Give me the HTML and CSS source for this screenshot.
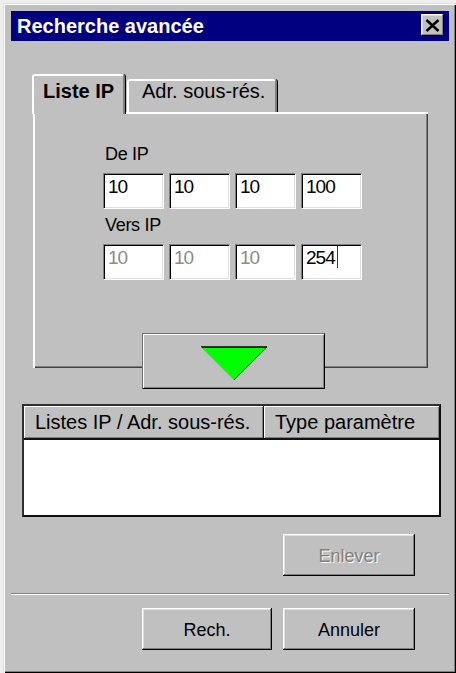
FILE: index.html
```html
<!DOCTYPE html>
<html lang="fr">
<head>
<meta charset="utf-8">
<title>Recherche avancée</title>
<link rel="stylesheet" href="styles.css">
</head>
<body>
<div class="window">
  <div class="titlebar">
    <span class="title">Recherche avancée</span>
    <button class="close" aria-label="Fermer">
      <svg width="15" height="13" viewBox="0 0 15 13"><path d="M1.5 1 L13.5 12 M13.5 1 L1.5 12" stroke="#000" stroke-width="2.5" fill="none"/></svg>
    </button>
  </div>

  <div class="tabs">
    <div class="tab active">Liste IP</div>
    <div class="tab">Adr. sous-rés.</div>
  </div>

  <div class="panel">
    <div class="label">De IP</div>
    <div class="ip-row">
      <div class="field">10</div>
      <div class="field">10</div>
      <div class="field">10</div>
      <div class="field">100</div>
    </div>
    <div class="label label-2">Vers IP</div>
    <div class="ip-row">
      <div class="field disabled">10</div>
      <div class="field disabled">10</div>
      <div class="field disabled">10</div>
      <div class="field">254<span class="caret"></span></div>
    </div>
  </div>

  <div class="arrow-wrap">
    <button class="arrow-btn" aria-label="Ajouter">
      <svg width="68" height="35" viewBox="0 0 68 35">
        <polygon points="1,1 67,1 34,34" fill="#00ff00"/>
        <line x1="1" y1="1" x2="67" y2="1" stroke="#000" stroke-width="1.6"/>
        <line x1="67" y1="1" x2="34" y2="34" stroke="#0a3a0a" stroke-width="1"/>
        <line x1="1" y1="1" x2="34" y2="34" stroke="#7fbf7f" stroke-width="0.8"/>
      </svg>
    </button>
  </div>

  <div class="list">
    <div class="list-head">
      <div class="col c1">Listes IP / Adr. sous-rés.</div>
      <div class="col c2">Type paramètre</div>
    </div>
    <div class="list-body"></div>
  </div>

  <div class="btn-row">
    <button class="btn btn-wide" disabled>Enlever</button>
  </div>

  <div class="sep"></div>

  <div class="btn-row footer">
    <button class="btn btn-rech">Rech.</button>
    <button class="btn btn-wide">Annuler</button>
  </div>
</div>
</body>
</html>
```

FILE: styles.css
```css
html, body {
  margin: 0;
  padding: 0;
}

body {
  background: #efefef;
  font-family: "Liberation Sans", Arial, sans-serif;
  font-size: 20px;
  color: #000;
}

.window {
  box-sizing: border-box;
  width: 453px;
  height: 670px;
  margin: 3px 0 0 3px;
  padding: 8px 7px 0 8px;
  background: #c0c0c0;
  box-shadow:
    inset 1px 1px #dfdfdf,
    inset 2px 2px #ffffff,
    inset -1px -1px #000000,
    inset -2px -2px #808080;
}

/* Title bar */
.titlebar {
  display: flex;
  align-items: flex-start;
  height: 30px;
  padding: 0 5px 0 6px;
  background: #000080;
  color: #fff;
}

.title {
  font-weight: bold;
  line-height: 30px;
  white-space: nowrap;
}

.close {
  margin: 3px 0 0 auto;
  width: 23px;
  height: 22px;
  padding: 0;
  border: 0;
  background: #c0c0c0;
  display: flex;
  align-items: center;
  justify-content: center;
  box-shadow:
    inset -1px -1px #000,
    inset 1px 1px #fff,
    inset -2px -2px #808080,
    inset 2px 2px #dfdfdf;
}

/* Tabs */
.tabs {
  display: flex;
  align-items: flex-end;
  gap: 2px;
  margin: 33px 0 0 21px;
}

.tab {
  box-sizing: border-box;
  width: 150px;
  height: 33px;
  padding: 0 0 0 13px;
  line-height: 21px;
  border-top: 2px solid #fff;
  border-left: 2px solid #fff;
  border-right: 2px solid #808080;
  border-radius: 3px 3px 0 0;
  box-shadow: 1px 0 0 #000;
  background: #c0c0c0;
  white-space: nowrap;
}

.tab.active {
  position: relative;
  z-index: 1;
  width: 93px;
  height: 40px;
  margin-bottom: -2px;
  padding: 4px 0 0 9px;
  line-height: 23px;
  font-weight: bold;
}

/* Panel */
.panel {
  box-sizing: border-box;
  width: 395px;
  height: 256px;
  margin-left: 22px;
  padding: 31px 0 0 70px;
  background: #c0c0c0;
  box-shadow:
    inset 2px 2px #fff,
    inset -1px -1px #404040,
    inset -2px -2px #808080;
}

.label {
  font-size: 18px;
  line-height: 23px;
  padding-left: 2px;
  margin-bottom: 7px;
  letter-spacing: -0.3px;
}

.label-2 {
  margin-top: 5px;
}

.ip-row {
  display: flex;
  gap: 5px;
}

.field {
  box-sizing: border-box;
  width: 61px;
  height: 36px;
  padding: 1px 0 0 4px;
  font-size: 19px;
  letter-spacing: -1px;
  line-height: 23px;
  background: #fff;
  border: 1px solid;
  border-color: #808080 #fff #fff #808080;
  box-shadow: inset 1px 1px #000, inset -1px -1px #dfdfdf;
  white-space: nowrap;
}

.field.disabled {
  color: #8a8a8a;
}

.caret {
  display: inline-block;
  width: 1px;
  height: 22px;
  margin-left: 2px;
  vertical-align: -4px;
  background: #0a4a4a;
}

/* Arrow button */
.arrow-wrap {
  display: flex;
  margin-top: -35px;
  padding-left: 131px;
}

.arrow-btn {
  box-sizing: border-box;
  width: 183px;
  height: 56px;
  padding: 12px 0 0 1px;
  margin: 0;
  display: flex;
  justify-content: center;
  align-items: flex-start;
  background: #c0c0c0;
  border: 1px solid;
  border-color: #707070 #000 #000 #707070;
  box-shadow: inset 1px 1px #fff, inset -1px -1px #808080;
}

/* List */
.list {
  box-sizing: border-box;
  width: 419px;
  height: 113px;
  margin: 15px 0 0 11px;
  border: 2px solid;
  border-color: #303030 #101010 #101010 #303030;
  background: #fff;
  display: flex;
  flex-direction: column;
}

.list-head {
  display: flex;
  height: 34px;
}

.col {
  box-sizing: border-box;
  height: 34px;
  line-height: 32px;
  padding-left: 11px;
  background: #c0c0c0;
  border-bottom: 2px solid #101010;
  box-shadow: inset 1px 1px #fff, inset -1px -1px #808080;
  white-space: nowrap;
}

.c1 {
  width: 240px;
  border-right: 1px solid #101010;
}

.c2 {
  flex: 1;
}

.list-body {
  flex: 1;
  background: #fff;
}

/* Buttons */
.btn-row {
  display: flex;
  justify-content: flex-end;
  gap: 11px;
  margin-top: 17px;
  padding-right: 34px;
}

.btn {
  box-sizing: border-box;
  height: 42px;
  margin: 0;
  padding: 3px 0 0;
  border: 0;
  font-family: inherit;
  font-size: 18px;
  color: #000;
  background: #c0c0c0;
  display: flex;
  align-items: center;
  justify-content: center;
  box-shadow:
    inset -1px -1px #000,
    inset 1px 1px #fff,
    inset -2px -2px #808080,
    inset 2px 2px #dfdfdf;
}

.btn-wide {
  width: 132px;
}

.btn-rech {
  width: 130px;
}

.btn:disabled {
  color: #808080;
  text-shadow: 1px 1px 0 #fff;
}

.sep {
  height: 0;
  margin-top: 17px;
  border-top: 1px solid #808080;
  border-bottom: 1px solid #fff;
}

.footer {
  margin-top: 13px;
}
```
